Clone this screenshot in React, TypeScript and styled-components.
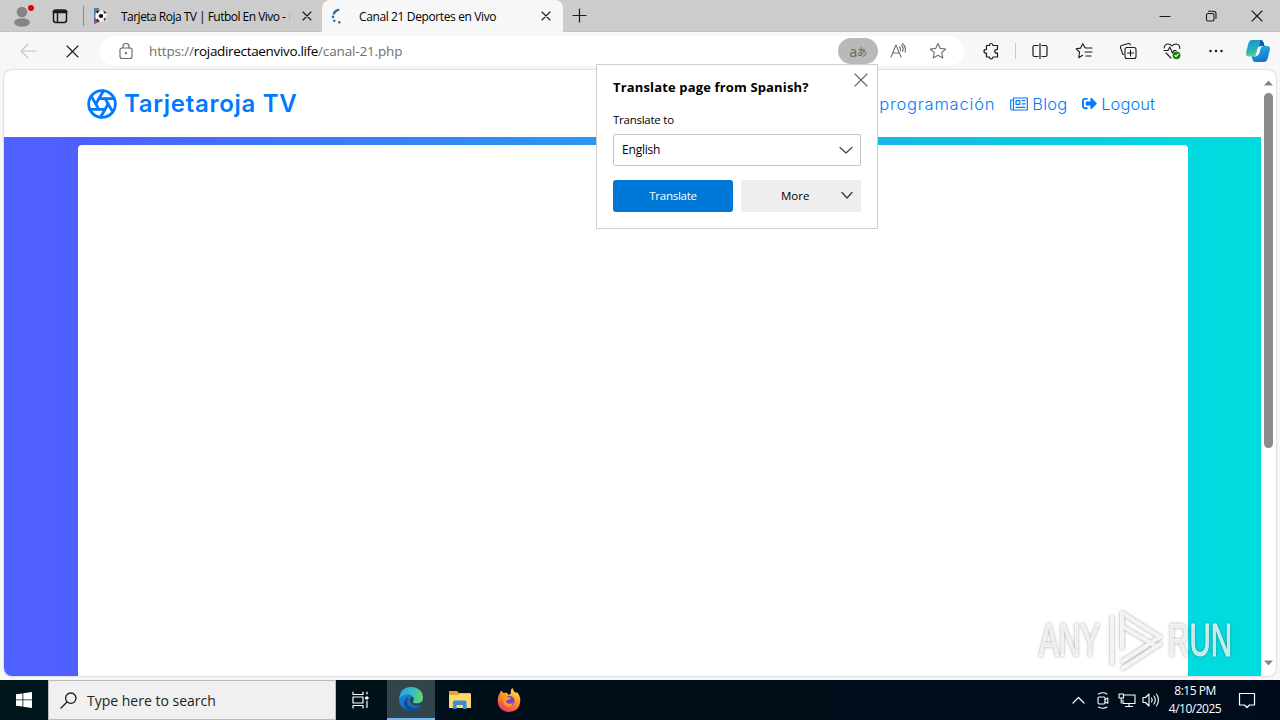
import React, { FC, ReactNode } from "react";
import styled, { createGlobalStyle } from "styled-components";
import { Aperture } from "lucide-react";
import { FaSignOutAlt } from "react-icons/fa";

const GlobalStyle = createGlobalStyle`
  * {
    box-sizing: border-box;
  }
  body {
    margin: 0;
    overflow: hidden;
    font-family: "Open Sans", "Noto Sans", sans-serif;
    font-size: 12px;
    color: #000;
  }
  svg {
    display: block;
    flex: none;
  }
`;

const Screen = styled.div`
  position: relative;
  display: flex;
  flex-direction: column;
  width: 1280px;
  height: 720px;
  background: #f7f7f7;
`;

const Text = styled.span<{ size?: number; spacing?: number }>`
  font-size: ${props => props.size || 12}px;
  letter-spacing: ${props => props.spacing || 0}px;
  white-space: pre;
`;

/* tab strip */

const TabStrip = styled.div`
  display: flex;
  height: 32px;
  background: #ccc;
  border-bottom: 1px solid #c2c2c2;
`;

const Profile = styled.div`
  display: flex;
  align-items: center;
  gap: 16px;
  width: 84px;
  padding-left: 10px;
  background: linear-gradient(#8c8c8c, #8c8c8c) right 0 top 6px / 1px 20px
    no-repeat;
`;

const Tab = styled.div<{ active?: boolean }>`
  display: flex;
  align-items: center;
  width: ${props => (props.active ? 241 : 238)}px;
  height: 32px;
  padding: 0 ${props => (props.active ? 12 : 10)}px 0 9px;
  border-radius: 8px 8px 0 0;
  background: ${props => (props.active ? "#f7f7f7" : "none")};
`;

const TabTitle = styled.div`
  display: flex;
  flex: 1;
  margin-left: 12px;
`;

const TitleFade = styled.span`
  background: linear-gradient(90deg, #999, #ccc);
  background-clip: text;
  color: transparent;
`;

const NewTab = styled.div`
  display: flex;
  align-items: center;
  margin-left: 9px;
`;

const WindowButtons = styled.div`
  display: flex;
  align-items: center;
  gap: 34px;
  margin-left: auto;
  padding-right: 17px;
`;

/* toolbar */

const Toolbar = styled.div`
  display: flex;
  align-items: center;
  height: 38px;
  padding-left: 20px;
`;

const NavButtons = styled.div`
  display: flex;
  align-items: center;
  gap: 29px;
  width: 80px;
`;

const AddressBar = styled.div`
  display: flex;
  align-items: center;
  width: 864px;
  height: 30px;
  padding-left: 18px;
  padding-right: 17px;
  border-radius: 15px;
  background: #fff;
`;

const Url = styled.div`
  flex: 1;
  margin-left: 15px;
  padding-bottom: 1px;
  font-size: 13.5px;
  letter-spacing: -0.15px;
  color: #6e6e6e;
`;

const Host = styled.span`
  color: #000;
  letter-spacing: -0.33px;
`;

const TranslateBadge = styled.div`
  display: flex;
  align-items: center;
  justify-content: center;
  width: 40px;
  height: 26px;
  margin-right: 11px;
  border-radius: 13px;
  background: #b9b9b9;
  color: #666;
  font-family: "Open Sans", "Noto Sans CJK JP", sans-serif;
  font-size: 14px;
  letter-spacing: -0.5px;
`;

const Kana = styled.span`
  font-size: 10px;
`;

const Favorite = styled.div`
  margin-left: 22px;
`;

const ToolIcons = styled.div`
  display: flex;
  align-items: center;
  gap: 26px;
  padding-left: 18px;
`;

const Divider = styled.div`
  width: 1px;
  height: 16px;
  margin: 0 -11px;
  background: #c9c9c9;
`;

const Copilot = styled.div`
  margin-left: -6px;
`;

/* page */

const Viewport = styled.div`
  display: flex;
  height: 606px;
  margin: 0 4px 4px;
  border-radius: 8px;
  overflow: hidden;
  background: #fff;
  box-shadow: 0 0 2px rgba(0, 0, 0, 0.3);
`;

const Page = styled.div`
  display: flex;
  flex-direction: column;
  width: 1257px;
`;

const SiteHeader = styled.div`
  display: flex;
  align-items: center;
  justify-content: space-between;
  height: 67px;
  padding: 0 106px 0 82px;
  color: #007bff;
  font-family: Inter, sans-serif;
`;

const Brand = styled.div`
  display: flex;
  align-items: center;
  gap: 6px;
  font-size: 24px;
  font-weight: 600;
  letter-spacing: 0.7px;
`;

const SiteNav = styled.div`
  display: flex;
  gap: 15px;
`;

const SiteLink = styled.div<{ spacing?: number }>`
  display: flex;
  align-items: center;
  gap: 4px;
  font-size: 16.5px;
  font-weight: 300;
  letter-spacing: ${props => props.spacing || 0}px;
`;

const Backdrop = styled.div`
  flex: 1;
  padding: 8px 73px 0 74px;
  background: linear-gradient(90deg, #5060ff 0%, #4d60fd 6%, #00dbe0 96%);
`;

const Card = styled.div`
  height: 100%;
  border-radius: 4px 4px 0 0;
  background: #fff;
`;

const Scrollbar = styled.div`
  display: flex;
  flex-direction: column;
  align-items: center;
  justify-content: space-between;
  width: 15px;
  padding: 10px 0;
`;

const Thumb = styled.div`
  width: 9px;
  height: 355px;
  margin-top: 7px;
  margin-bottom: auto;
  border-radius: 5px;
  background: #8c8c8c;
`;

/* translate popup */

const Popup = styled.div`
  position: absolute;
  left: 596px;
  top: 64px;
  display: flex;
  flex-direction: column;
  width: 282px;
  height: 165px;
  padding: 8px 16px 16px;
  border: 1px solid #cfcfcf;
  background: #fff;
`;

const PopupHeader = styled.div`
  display: flex;
  justify-content: space-between;
  height: 38px;
  margin-right: -7px;
  font-weight: 700;
  line-height: 28px;
`;

const FieldLabel = styled.div`
  height: 23px;
  line-height: 17px;
`;

const Select = styled.div`
  display: flex;
  align-items: center;
  justify-content: space-between;
  height: 32px;
  padding: 0 7px 1px 8px;
  border: 1px solid #c4c4c4;
  border-radius: 2px;
`;

const PopupButtons = styled.div`
  display: flex;
  gap: 8px;
  margin-top: 14px;
`;

const PopupButton = styled.div<{ primary?: boolean }>`
  display: flex;
  align-items: center;
  justify-content: ${props => (props.primary ? "center" : "space-between")};
  width: 120px;
  height: 32px;
  padding: ${props => (props.primary ? "0 0 2px" : "0 8px 2px 40px")};
  border-radius: 3px;
  background: ${props => (props.primary ? "#0078d7" : "#eee")};
  color: ${props => (props.primary ? "#fff" : "#000")};
`;

/* taskbar */

const Taskbar = styled.div`
  display: flex;
  height: 40px;
  background: linear-gradient(90deg, #00161c, #000f1a 45%, #000c1b);
  color: #fff;
`;

const TaskButton = styled.div<{ active?: boolean; width?: number }>`
  display: flex;
  align-items: center;
  justify-content: center;
  width: ${props => props.width || 48}px;
  background: ${props => (props.active ? "#33454c" : "none")};
  border-bottom: ${props => (props.active ? "2px solid #76b9ed" : "none")};
`;

const TaskView = styled(TaskButton)`
  padding-right: 4px;
`;

const Search = styled.div`
  display: flex;
  align-items: center;
  gap: 10px;
  width: 288px;
  padding-left: 11px;
  border: 1px solid #b8bcbd;
  background: #f0f0f0;
  color: #222;
`;

const Tray = styled.div`
  display: flex;
  align-items: center;
  margin-left: auto;
  padding-right: 24px;
`;

const TrayIcons = styled.div`
  display: flex;
  align-items: center;
  gap: 6px;
`;

const TrayArrow = styled.div`
  margin-right: 3px;
`;

const Clock = styled.div`
  display: flex;
  flex-direction: column;
  align-items: center;
  width: 70px;
  margin-right: 8px;
  line-height: 18px;
`;

/* watermark */

const Watermark = styled.div`
  position: absolute;
  left: 1039px;
  top: 606px;
  display: flex;
  align-items: center;
  height: 68px;
  color: rgba(255, 255, 255, 0.75);
  filter: drop-shadow(0 0 1.5px rgba(70, 70, 70, 0.6));
`;

const WatermarkWord = styled.div`
  width: 65px;
  font: 47px/70px "Liberation Sans", sans-serif;
  -webkit-text-stroke: 1px rgba(255, 255, 255, 0.7);
  transform: scaleX(0.63);
  transform-origin: left;
  white-space: nowrap;
`;

interface IIcon {
  w?: number;
  h?: number;
  color?: string;
  stroke?: number;
  children: ReactNode;
}

const Icon: FC<IIcon> = ({
  w = 16,
  h = 16,
  color = "#1a1a1a",
  stroke = 1.1,
  children
}) => (
  <svg
    width={w}
    height={h}
    viewBox={`0 0 ${w} ${h}`}
    fill="none"
    stroke={color}
    strokeWidth={stroke}
    strokeLinecap="round"
    strokeLinejoin="round"
  >
    {children}
  </svg>
);

const Cross: FC<{ size: number; color?: string }> = ({ size, color }) => (
  <Icon w={size} h={size} color={color}>
    <path
      d={`M1 1L${size - 1} ${size - 1}M${size - 1} 1L1 ${size - 1}`}
    />
  </Icon>
);

const Chevron: FC<{ w: number; up?: boolean; color?: string }> = ({
  w,
  up,
  color
}) => (
  <Icon w={w} h={8} color={color} stroke={1.2}>
    <path
      d={up ? `M1 7L${w / 2} 1.5L${w - 1} 7` : `M1 1.5L${w / 2} 7L${w - 1} 1.5`}
    />
  </Icon>
);

const Tabs = () => (
  <TabStrip>
    <Profile>
      <Icon w={26} h={26} stroke={0}>
        <circle cx="12" cy="9" r="5.3" fill="#858585" />
        <ellipse cx="12" cy="19.5" rx="8" ry="4.2" fill="#858585" />
        <circle cx="21" cy="5" r="3" fill="#e3000b" />
      </Icon>
      <Icon w={16} h={16} stroke={1.5}>
        <rect x="1.5" y="2" width="13" height="12.5" rx="2.5" />
        <path d="M2 3.7H14" strokeWidth="3" />
        <path d="M5.5 5V14" />
      </Icon>
    </Profile>
    <Tab>
      <Icon w={16} h={16} stroke={0}>
        <path d="M1 0H6L4 8L7 13L1 16Z" fill="#567d9d" />
        <path d="M1 11L5 10L6 14L1 16Z" fill="#a04a8e" />
        <path d="M11 3L15 8L11 14Z" fill="#dccfa4" />
        <circle cx="8" cy="8" r="5.7" fill="#f4f4f4" />
        <path
          d="M7 6L10 6.5L10 9.5L7 10L5.5 8ZM3 3.5L7 2L4.5 5.5ZM10.5 2.5L13.5 5L11 5.5ZM4 10.5L7 13.5L3.5 13ZM10.5 11L13 9.5L11.5 13Z"
          fill="#151515"
        />
      </Icon>
      <TabTitle>
        <Text size={12} spacing={-0.52}>
          Tarjeta Roja TV | Futbol En Vivo - <TitleFade>I</TitleFade>
        </Text>
      </TabTitle>
      <Cross size={10} />
    </Tab>
    <Tab active>
      <Icon w={16} h={16} color="#24699f" stroke={2.4}>
        <path d="M2.9 5.5Q4.2 2.6 7.2 1.9" />
        <path d="M2 8.8V9M3.3 12.6V12.7M8.4 14.3V14.4" />
      </Icon>
      <TabTitle>
        <Text size={12} spacing={-0.38}>
          Canal 21 Deportes en Vivo
        </Text>
      </TabTitle>
      <Cross size={10} />
    </Tab>
    <NewTab>
      <Icon w={15} h={15} stroke={1.2}>
        <path d="M7.5 1V14M1 7.5H14" />
      </Icon>
    </NewTab>
    <WindowButtons>
      <Icon w={12} h={12}>
        <path d="M1 6.5H11" />
      </Icon>
      <Icon w={12} h={12}>
        <rect x="1.5" y="3.5" width="7.5" height="7.5" rx="1.5" />
        <path d="M3.5 1.3H8.5Q11 1.3 11 3.7V8.5" />
      </Icon>
      <Cross size={12} />
    </WindowButtons>
  </TabStrip>
);

const ToolbarRow = () => (
  <Toolbar>
    <NavButtons>
      <Icon w={17} h={16} color="#c4c4c4">
        <path d="M16 8H1M8 1L1 8L8 15" />
      </Icon>
      <Cross size={13} />
    </NavButtons>
    <AddressBar>
      <Icon w={16} h={18} color="#666">
        <rect x="2" y="6" width="12" height="10.5" rx="2" />
        <path d="M5 6V4.2Q5 1.5 8 1.5T11 4.2V6" />
        <circle cx="8" cy="11.2" r="0.6" fill="#666" />
      </Icon>
      <Url>
        https://<Host>rojadirectaenvivo.life</Host>/canal-21.php
      </Url>
      <TranslateBadge>
        a<Kana>あ</Kana>
      </TranslateBadge>
      <Icon w={18} h={18} color="#6e6e6e">
        <path d="M2 15L7 3L12 15M3.7 11H10.3M10.5 5Q12 6.5 11.5 9M12.3 3.2Q15.3 6 13.6 9.5M13.5 1.5Q17.7 5 16 10" />
      </Icon>
      <Favorite>
        <Icon w={18} h={18} color="#6e6e6e">
          <path d="M9 1.5L11.3 6.4L16.7 7L12.7 10.7L13.8 16L9 13.3L4.2 16L5.3 10.7L1.3 7L6.7 6.4Z" />
        </Icon>
      </Favorite>
    </AddressBar>
    <ToolIcons>
      <Icon w={18} h={18} stroke={1.2}>
        <path d="M4.5 3.5H7.5Q7.5 1.5 9.2 1.5T11 3.5H15.5V7.3Q12.7 7.3 12.7 9.2T15.5 11.2V15H11Q11 16.8 9.2 16.8T7.5 15H4.5V11.3Q2 11.3 2 9.3T4.5 7.3Z" />
      </Icon>
      <Divider />
      <Icon w={18} h={18} stroke={1.2}>
        <path d="M7 3.5H3.5Q2 3.5 2 5V13Q2 14.5 3.5 14.5H7M11 3.5H14.5Q16 3.5 16 5V13Q16 14.5 14.5 14.5H11M9 1.5V16.5" />
      </Icon>
      <Icon w={18} h={18}>
        <path d="M10.7 5.9L10 5.7L7.8 1.8L5.6 6.1L1.2 6.8L4.5 10L3.8 15.7L7.5 13.3M11.5 6H17M10 10H17M11 14H16" />
      </Icon>
      <Icon w={18} h={18}>
        <path d="M4.5 12.5L3.5 11.7L1.5 5.5Q1 4 2.5 3.5L9.5 1.5Q11 1.2 11.4 3" />
        <rect x="6" y="5.5" width="11" height="11" rx="2" />
        <path d="M11.5 8V14M8.5 11H14.5" />
      </Icon>
      <Icon w={18} h={18}>
        <path d="M1.2 6Q1.5 2 5 2Q7.5 2 9 4Q10.5 2 13 2Q17 2.3 16.8 6.5M1 8.5H5L6.8 5L9.5 11L11 8.5H13M3 11L8 16" />
        <circle cx="13.5" cy="13.3" r="3.9" fill="#188018" stroke="none" />
        <path d="M11.9 13.5L13 14.6L15.2 12.2" stroke="#fff" />
      </Icon>
      <Icon w={18} h={18} stroke={0}>
        <g fill="#111">
          <circle cx="3.5" cy="9" r="1.2" />
          <circle cx="9" cy="9" r="1.2" />
          <circle cx="14.5" cy="9" r="1.2" />
        </g>
      </Icon>
      <Copilot>
        <Icon w={26} h={24} stroke={0}>
          <defs>
            <linearGradient id="copilotLeft" x1="0" y1="0" x2="0.3" y2="1">
              <stop offset="0" stopColor="#1690d2" />
              <stop offset="0.65" stopColor="#28b4b6" />
              <stop offset="1" stopColor="#64cf91" />
            </linearGradient>
            <linearGradient id="copilotRight" x1="0" y1="0" x2="0.4" y2="1">
              <stop offset="0" stopColor="#20b9e5" />
              <stop offset="1" stopColor="#1674d1" />
            </linearGradient>
          </defs>
          <path
            d="M7 1H16Q18 1 19 5L19.5 7H16Q13.5 7 12.5 10L11.3 15Q10.5 17.5 7.5 17.5H4Q0 17.5 1.4 12L3.5 4Q4.5 1 7 1Z"
            fill="url(#copilotLeft)"
          />
          <path
            d="M19 7H22Q26 7 24.6 12L22.5 20Q21.5 23 19 23H10Q8 23 7.2 19.5L6.8 17.5Q10.5 17.5 11.5 15H14L16 7Z"
            fill="url(#copilotRight)"
          />
          <path
            d="M15.5 7Q13.5 7 12.6 10L11.2 15Q10.8 17 9 17.5H11Q13.5 17 14.3 14L15.3 10Q16 7.3 18 7Z"
            fill="#fff"
          />
          <path
            d="M15.5 1Q18 1 19 5L19.5 7H16Q14.8 7 14 8Z"
            fill="#1953b5"
          />
        </Icon>
      </Copilot>
    </ToolIcons>
  </Toolbar>
);

const Site = () => (
  <Viewport>
    <Page>
      <SiteHeader>
        <Brand>
          <Aperture size={32} strokeWidth={2.1} />
          Tarjetaroja TV
        </Brand>
        <SiteNav>
          <SiteLink spacing={0.82}>programación</SiteLink>
          <SiteLink spacing={0.15}>
            <Icon w={18} h={14} color="#007bff" stroke={1.2}>
              <path d="M3.5 1H17.3V13H2Q0.7 13 0.7 11.5V3H3.5M3.5 1V11.5Q3.5 13 2.2 13" />
              <rect x="6" y="3.7" width="3.8" height="3.6" />
              <path d="M12 3.7H15M12 6.8H15M6 10.3H15" />
            </Icon>
            Blog
          </SiteLink>
          <SiteLink spacing={0.05}>
            <FaSignOutAlt size={15} />
            Logout
          </SiteLink>
        </SiteNav>
      </SiteHeader>
      <Backdrop>
        <Card />
      </Backdrop>
    </Page>
    <Scrollbar>
      <Icon w={9} h={6} stroke={0}>
        <path d="M0 5.5L4.5 0.5L9 5.5Z" fill="#858585" />
      </Icon>
      <Thumb />
      <Icon w={9} h={6} stroke={0}>
        <path d="M0 0.5L4.5 5.5L9 0.5Z" fill="#858585" />
      </Icon>
    </Scrollbar>
  </Viewport>
);

const TranslatePopup = () => (
  <Popup>
    <PopupHeader>
      <Text size={13} spacing={0.15}>
        Translate page from Spanish?
      </Text>
      <Cross size={14} color="#666" />
    </PopupHeader>
    <FieldLabel>
      <Text size={11.5} spacing={-0.25}>
        Translate to
      </Text>
    </FieldLabel>
    <Select>
      <Text size={12} spacing={-0.2}>
        English
      </Text>
      <Chevron w={14} color="#444" />
    </Select>
    <PopupButtons>
      <PopupButton primary>
        <Text size={11.5} spacing={-0.25}>
          Translate
        </Text>
      </PopupButton>
      <PopupButton>
        <Text size={11.5}>More</Text>
        <Chevron w={12} color="#333" />
      </PopupButton>
    </PopupButtons>
  </Popup>
);

const WindowsTaskbar = () => (
  <Taskbar>
    <TaskButton>
      <Icon w={16} h={16} stroke={0}>
        <path
          d="M0 2.3L6.5 1.4V7.5H0ZM7.3 1.2L16 0V7.5H7.3ZM0 8.3H6.5V14.6L0 13.7ZM7.3 8.3H16V16L7.3 14.8Z"
          fill="#fff"
        />
      </Icon>
    </TaskButton>
    <Search>
      <Icon w={17} h={17} stroke={1.3}>
        <circle cx="10.8" cy="6.2" r="5.2" />
        <path d="M7 10L1 16" />
      </Icon>
      <Text size={14}>Type here to search</Text>
    </Search>
    <TaskView width={51}>
      <Icon w={18} h={18} color="#fff" stroke={1.2}>
        <path d="M2 1V3.5H12V1M2 17V14.5H12V17M16 1V3M16 10V16.5" />
        <rect x="2" y="6" width="10" height="6" />
        <path d="M15 6H17V8H15Z" fill="#fff" strokeWidth="1" />
      </Icon>
    </TaskView>
    <TaskButton active>
      <Icon w={24} h={24} stroke={0}>
        <defs>
          <linearGradient id="edgeTop" x1="0" y1="0.3" x2="1" y2="0.5">
            <stop offset="0" stopColor="#2a9fda" />
            <stop offset="0.55" stopColor="#37bfc9" />
            <stop offset="1" stopColor="#6bd461" />
          </linearGradient>
          <linearGradient id="edgeBody" x1="0" y1="0" x2="0.5" y2="1">
            <stop offset="0" stopColor="#1a91d8" />
            <stop offset="1" stopColor="#1069bd" />
          </linearGradient>
        </defs>
        <circle cx="12" cy="12" r="12" fill="url(#edgeBody)" />
        <path
          d="M0.3 11Q1.5 0 12 0Q23 0.5 24 10Q24 16 18 16.5Q13.5 16.5 13.8 14.5Q16 12 13.5 9Q8 4.5 0.3 11Z"
          fill="url(#edgeTop)"
        />
        <path
          d="M8.2 13Q8 21 16 21.2Q20 21 22.7 18Q20 24 12 24Q5 23 5 16Q5.5 11 10 9.5Q8.4 11 8.2 13Z"
          fill="#124b93"
        />
        <path
          d="M13.8 14.5Q13.5 16.5 18 16.5Q22 16.5 24 13.5V16L22.8 18Q18 20 14 18Q10 15.5 11 11.5Q12.5 9 14.3 10.5Q15 12.5 13.8 14.5Z"
          fill="#33454c"
        />
      </Icon>
    </TaskButton>
    <TaskButton width={50}>
      <Icon w={22} h={20} stroke={0}>
        <path d="M0 1H8L10 3H21V8H0Z" fill="#e8a52c" />
        <path d="M0 5H9L11 3.5H22V18H0Z" fill="#fcd66f" />
        <path
          d="M4 19V12Q4 10.5 5.5 10.5H16Q17.5 10.5 17.5 12V19H14V15H7.5V19Z"
          fill="#378fd0"
        />
      </Icon>
    </TaskButton>
    <TaskButton width={47}>
      <Icon w={24} h={24} stroke={0}>
        <defs>
          <linearGradient id="fox" x1="0.8" y1="0" x2="0.3" y2="1">
            <stop offset="0" stopColor="#fff04c" />
            <stop offset="0.45" stopColor="#ff9726" />
            <stop offset="1" stopColor="#ee3559" />
          </linearGradient>
        </defs>
        <path
          d="M3 5L4 2.5L6.5 5L9.5 4.5L12 7L14 5Q13 2 15.5 0Q16 3 19 5L20 4Q23.5 8 23.3 13Q22.5 23.5 12 24Q1 23.5 0.7 12Q0.8 8 3 5Z"
          fill="url(#fox)"
        />
        <circle cx="12.5" cy="13" r="5" fill="#7844c5" />
        <path
          d="M6.5 8Q9.5 7.5 11.5 9.5H14Q13 12 10 12Q8.5 13 10 15Q13 16.7 16 14.5Q15 19.5 10.5 18.6Q5 16.5 6.5 8Z"
          fill="#ff9b2a"
        />
      </Icon>
    </TaskButton>
    <Tray>
      <TrayIcons>
        <TrayArrow>
          <Chevron w={13} up color="#fff" />
        </TrayArrow>
        <Icon w={18} h={18} color="#fff">
          <rect x="4" y="6" width="7" height="7" rx="1.2" />
          <path d="M11 8.5L13.8 7V12.3L11 11M4.5 3Q9 0.5 13 3M4.5 16Q9 18.5 13 16" />
        </Icon>
        <Icon w={18} h={18} color="#fff">
          <path d="M6.5 4H17V12.5H5V9M11 12.5V15.5M7.5 15.5H14.5M1 3H5.5V7H1ZM3.2 7V12" />
        </Icon>
        <Icon w={18} h={18} color="#fff">
          <path d="M1 6.5H3.5L7 3V15L3.5 11.5H1ZM9.5 7Q10.8 9 9.5 11M12 5Q14.6 9 12 13M14.5 3Q18.4 9 14.5 15" />
        </Icon>
      </TrayIcons>
      <Clock>
        <Text size={12} spacing={-0.5}>
          8:15 PM
        </Text>
        <Text size={12} spacing={-0.5}>
          4/10/2025
        </Text>
      </Clock>
      <Icon w={18} h={18} color="#fff" stroke={1.2}>
        <path d="M1.5 2.5H16.5V14H11.5L9 16.5L6.5 14H1.5Z" />
      </Icon>
    </Tray>
  </Taskbar>
);

const App: FC = () => (
  <Screen>
    <GlobalStyle />
    <Tabs />
    <ToolbarRow />
    <Site />
    <WindowsTaskbar />
    <TranslatePopup />
    <Watermark>
      <WatermarkWord>ANY</WatermarkWord>
      <Icon w={64} h={64} color="rgba(255,255,255,0.85)" stroke={4}>
        <path d="M18 40V5L56 29L19 53M8 10V55M18 18L50 37M19 60L56 36" />
      </Icon>
      <WatermarkWord>RUN</WatermarkWord>
    </Watermark>
  </Screen>
);

export default App;
